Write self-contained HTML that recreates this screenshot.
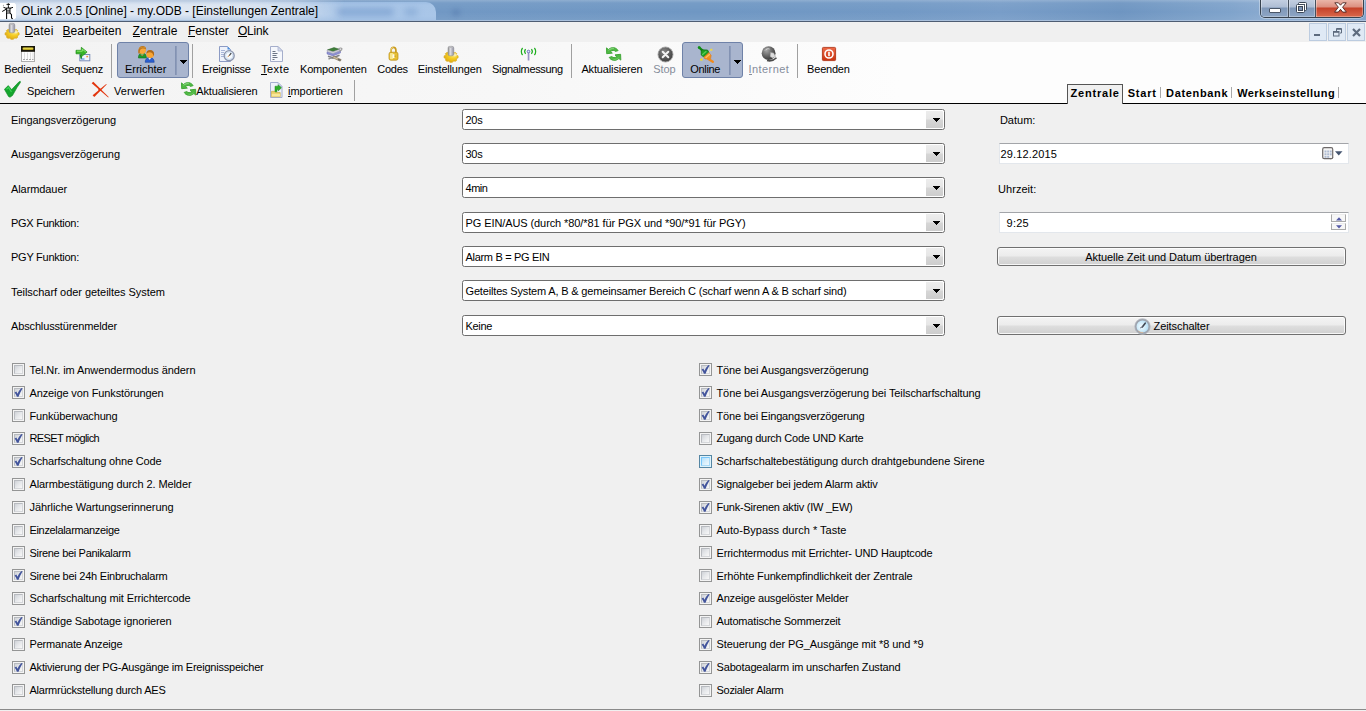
<!DOCTYPE html>
<html lang="de"><head><meta charset="utf-8"><title>OLink 2.0.5 [Online] - my.ODB - [Einstellungen Zentrale]</title>
<style>
html,body{margin:0;padding:0}
body{width:1366px;height:711px;overflow:hidden;position:relative;background:#f0f0f0;font:11px/13px "Liberation Sans",sans-serif;color:#000}
body>*{position:absolute}
.t{white-space:nowrap;font-family:"Liberation Sans",sans-serif}
.ul{position:absolute;left:0;height:1px}
.ic{overflow:visible}
#title{left:0;top:0;width:1366px;height:21px;background:linear-gradient(to bottom,rgba(255,255,255,.22) 0,rgba(255,255,255,.05) 3px,rgba(255,255,255,0) 12px,rgba(255,255,255,.06) 20px),linear-gradient(to right,#7399c5 0,#7198c4 430px,#6f97c3 700px,#7299c5 900px,#789dc8 1000px,#6e95c1 1120px,#7fa3cb 1230px,#88a9cf 1262px,#7ca0c9 1366px)}
#ttab{left:0;top:2px;width:436px;height:19px;border-radius:0 10px 0 0;background:linear-gradient(to bottom,#9dbde3 0,#a8c5e7 3px,#a9c6e8 14px,#a3c1e5 19px)}
#tblob1{left:336px;top:8px;width:58px;height:8px;background:rgba(105,145,198,.55);filter:blur(3px);border-radius:4px}
#tblob2{left:404px;top:8px;width:14px;height:8px;background:rgba(105,145,198,.4);filter:blur(3px);border-radius:4px}
#tblob3{left:452px;top:9px;width:8px;height:7px;background:rgba(70,105,160,.35);filter:blur(2.500px);border-radius:4px}
#tglow{left:0;top:0;width:345px;height:21px;background:linear-gradient(to bottom,rgba(200,212,230,.75) 0,rgba(222,230,241,.97) 5px,rgba(225,232,242,.98) 14px,rgba(196,213,234,.9) 20px);-webkit-mask-image:linear-gradient(to right,#000 0,#000 235px,rgba(0,0,0,.75) 290px,rgba(0,0,0,0) 345px);mask-image:linear-gradient(to right,#000 0,#000 235px,rgba(0,0,0,.75) 290px,rgba(0,0,0,0) 345px)}
#tline1{left:0;top:20px;width:1366px;height:1px;background:#a9c0dc}
#tline2{left:0;top:21px;width:1366px;height:1px;background:#4e5d73}
#capbtns{left:1260px;top:0;width:104px;height:18px;border:1px solid #37424f;border-top:0;border-radius:0 0 5px 5px;box-sizing:border-box;overflow:hidden;box-shadow:0 0 0 1px rgba(255,255,255,.35)}
.cb{position:absolute;top:0;height:17px;box-sizing:border-box;border-right:1px solid #46505e;background:linear-gradient(to bottom,#c3cfe1 0,#aebdd4 7px,#7f97b8 8px,#8ea6c5 17px);box-shadow:inset 1px 0 0 rgba(255,255,255,.35),inset -1px -1px 0 rgba(255,255,255,.3)}
.cmin{left:0;width:28px}.cmin i{position:absolute;left:9px;top:9px;width:10px;height:3px;background:#fff;border:1px solid #4a5668;box-sizing:content-box;border-radius:1px;margin:-1px}
.cmax{left:28px;width:27px}
.cclose{left:55px;width:47px;border-right:0;background:linear-gradient(to bottom,#eab5a9 0,#dc8f80 7px,#c5412a 8px,#d9694c 17px)}
#menubar{left:0;top:22px;width:1366px;height:20px;background:#f0f0f0}
.mdi{top:23px;width:18px;height:18px;box-sizing:border-box;border:1px solid #bccce0;background:#dfe9f5}
#tb1{left:0;top:42px;width:1366px;height:37px;background:linear-gradient(to right,#f3f3f3 0,#f7f7f7 500px,#fdfdfd 900px,#fdfdfd 100%)}
#tb2{left:0;top:79px;width:1366px;height:24px;background:linear-gradient(to right,#f3f3f3 0,#f7f7f7 500px,#fdfdfd 900px,#fdfdfd 100%)}
#tabbg{left:0;top:0;width:0;height:0}
.sep{width:1px;background:#a0a0a0}
.pbtn{box-sizing:content-box;border:1px solid #6f82a8;border-radius:3px;background:#a9b5ce}
.pbtn i{position:absolute;top:3px;width:2px;height:29px;background:linear-gradient(to right,#7d8dae,#93a1bf)}
.pbtn b{position:absolute;top:17px}
#hline{left:0;top:103px;width:1366px;height:1px;background:#000}
#tabsel{left:1067px;top:84px;width:56px;height:20px;box-sizing:border-box;border:1px solid #555;border-bottom:0;background:#f0f0f0}
.tsep{top:87px;width:1px;height:11px;background:#a8a8a8}
#main{left:0;top:104px;width:1366px;height:605px;background:#f0f0f0}
#botline{left:0;top:709px;width:1366px;height:1px;background:#8a8a8a}
.combo{left:462px;width:483px;height:21px;box-sizing:border-box;border:1px solid #6e6e6e;border-radius:2.500px;background:#fff}
.combo i{position:absolute;right:1px;top:1px;width:17px;height:17px;background:linear-gradient(to bottom,#ededed 0,#e6e6e6 8px,#d6d6d6 9px,#cdcdcd 17px);border-radius:0 1px 1px 0}
.combo b{position:absolute;left:470px;top:8px}
.combo b,.pbtn b{width:7px;height:1px;background:#000}
.combo b::before,.pbtn b::before{content:'';position:absolute;left:1px;top:1px;width:5px;height:1px;background:#000}
.combo b::after,.pbtn b::after{content:'';position:absolute;left:3px;top:3px;width:1px;height:1px;background:#000;box-shadow:-1px -1px #000,0 -1px #000,1px -1px #000}
.edit{left:999px;width:350px;height:21px;box-sizing:border-box;background:#fff;border:1px solid #e3e7ec;border-top-color:#a3a5a9}
.spin{left:1331px;width:15px;height:8px;box-sizing:border-box;border:1px solid #a9a9a9;border-top-color:#ececec;background:#f7f7f7}
.spin svg{position:absolute;left:4px}
.btn{left:997px;width:349px;height:19px;box-sizing:border-box;border:1px solid #707070;border-radius:3px;background:linear-gradient(to bottom,#f4f4f4 0,#ececec 8px,#dedede 9px,#d0d0d0 17px);box-shadow:inset 0 0 0 1px rgba(255,255,255,.8)}
.cbx{width:13px;height:13px;box-sizing:border-box;border:1px solid #949595;background:#f4f4f4}
.cbx i{position:absolute;left:1px;top:1px;width:9px;height:9px;box-sizing:border-box;border:1px solid #b8bbc0;border-right-color:#d5d7da;border-bottom-color:#d5d7da;background:linear-gradient(135deg,#cfd2d7 0,#e4e6e9 45%,#f8f8f8 100%)}
.cbx i svg{position:absolute;left:-1px;top:-1px}
.cbx.hot{border-color:#5586a3;background:#dff3fb}
.cbx.hot i{border-color:#79c6f9;border-right-color:#a8daf8;border-bottom-color:#a8daf8;background:linear-gradient(135deg,#b1dffd 0,#d6eefb 50%,#f0f9fe 100%)}

</style></head>
<body>
<div id="title"></div>
<div id="ttab"></div><div id="tblob1"></div><div id="tblob2"></div><div id="tblob3"></div><div id="tglow"></div>
<div id="tline1"></div><div id="tline2"></div>
<svg id="appico" width="17" height="17" viewBox="0 0 17 17" style="left:0;top:3px">
<path d="M-1 0h15.500l1.500 1.500v13.300l-1.500 1.500H-1z" fill="#fff"/>
<rect x="6.600" y="5" width="3.400" height="3" fill="#cfcfcf"/>
<g stroke="#000" stroke-width=".9" fill="none">
<path d="M6.500 1.400h3.500M8.300 .2v2.400M8.400 2.600v2.400"/>
<rect x="6.600" y="5" width="3.400" height="5"/>
<path d="M6.600 8h3.400"/>
<path d="M6.600 5.600L3.400 4.200M6.200 6.200L2.200 8.500M10 5.400l3-1.100" stroke-width="1"/>
<path d="M6.600 10v5.900M10 10l1.500 1.700v3.300l1.200.7" stroke-width="1.050"/>
</g>
<circle cx="3.400" cy="2.300" r=".5" fill="#777"/>
</svg>
<div id="capbtns"><div class="cb cmin"><i></i></div><div class="cb cmax"><svg width="13" height="13" viewBox="0 0 13 13" style="position:absolute;left:6px;top:1px"><g fill="none" stroke="#3b4656" stroke-width="1"><rect x="3.5" y="1.5" width="8" height="8" rx="1" fill="#fff" stroke="#3b4656"/><rect x="5.5" y="3.5" width="4" height="4" fill="#7d93b4"/><rect x="1.5" y="3.5" width="8" height="8" rx="1" fill="#fff"/><rect x="3.5" y="5.5" width="4" height="4" fill="#7d93b4"/></g></svg></div><div class="cb cclose"><svg width="13" height="11" viewBox="0 0 13 11" style="position:absolute;left:18px;top:2px"><path d="M.8.800h3.600l2.100 2.400L8.600.8h3.600L8.600 5.200l3.800 4.900H8.700L6.500 7.300 4.300 10.100H.6l3.800-4.900z" fill="#fff" stroke="#4a2420" stroke-width=".9" stroke-linejoin="round"/></svg></div></div>
<div id="menubar"></div>
<svg class="ic" width="17" height="18" viewBox="0 0 17 18" style="left:4px;top:23px">
<defs><linearGradient id="gcym" x1="0" x2="1" y1="0" y2="0"><stop offset="0" stop-color="#8d8d8d"/><stop offset=".4" stop-color="#dedee2"/><stop offset="1" stop-color="#8e8ea0"/></linearGradient>
<radialGradient id="ggdm" cx=".65" cy=".3" r=".8"><stop offset="0" stop-color="#fbe98a"/><stop offset=".45" stop-color="#f5cd22"/><stop offset="1" stop-color="#dba414"/></radialGradient></defs>
<path d="M9.43 16.30L6.77 16.30L6.58 15.48L4.99 14.97L4.11 15.45L2.23 13.99L2.84 13.31L2.19 12.08L1.13 11.93L1.13 9.87L2.19 9.72L2.84 8.49L2.23 7.81L4.11 6.35L4.99 6.83L6.58 6.32L6.77 5.50L9.43 5.50L9.62 6.32L11.21 6.83L12.09 6.35L13.97 7.81L13.36 8.49L14.01 9.72L15.07 9.87L15.07 11.93L14.01 12.08L13.36 13.31L13.97 13.99L12.09 15.45L11.21 14.97L9.62 15.48z" fill="url(#ggdm)" stroke="#d9a81c" stroke-width=".7" stroke-linejoin="round"/>
<ellipse cx="11.800" cy="9" rx="2" ry="1.400" fill="#f9efb8" opacity=".85"/>
<rect x="5" y=".3" width="5.800" height="9.500" rx="1.800" fill="url(#gcym)" stroke="#8a8a8e" stroke-width=".5"/>
<ellipse cx="7.900" cy="1.300" rx="2.300" ry=".8" fill="#b9b9bd"/>
</svg>
<div class="mdi" style="left:1309px"><i style="position:absolute;left:4px;top:10px;width:6px;height:2px;background:#5d6b7e"></i></div>
<div class="mdi" style="left:1328px"><svg width="10" height="9" viewBox="0 0 10 9" style="position:absolute;left:4px;top:4px"><g fill="none" stroke="#5d6b7e"><path d="M3.500 3V.5h5v4.500H7" /><path d="M3.500 1.300h5" /><rect x=".5" y="3.500" width="5.500" height="4.500"/><path d="M.5 4.300h5.500"/></g></svg></div>
<div class="mdi" style="left:1347px"><svg width="9" height="9" viewBox="0 0 9 9" style="position:absolute;left:4px;top:4px"><path d="M1 1l7 7M8 1L1 8" stroke="#5d6b7e" stroke-width="2.200"/></svg></div>
<div id="tb1"></div><div id="tb2"></div><div id="tabbg"></div>
<i class="sep" style="left:111px;top:44px;height:34px"></i>
<i class="sep" style="left:192px;top:44px;height:34px"></i>
<i class="sep" style="left:571px;top:44px;height:34px"></i>
<i class="sep" style="left:797px;top:44px;height:34px"></i>
<div class="pbtn" style="left:117px;top:42px;width:70px;height:34px"><i style="left:57px"></i><b style="left:62px"></b></div>
<div class="pbtn" style="left:682px;top:42px;width:59px;height:34px"><i style="left:46px"></i><b style="left:51px"></b></div>
<svg class="ic" width="14" height="16" viewBox="0 0 14 16" style="left:21px;top:46px">
<rect x=".5" y=".5" width="13" height="15" fill="#fdfdfd" stroke="#adadad"/>
<rect x="0" y="0" width="14" height="5.800" fill="#17150a"/>
<rect x="1.500" y="1.500" width="11" height="2.400" rx=".8" fill="#b9a51e"/>
<rect x="2" y="1.700" width="10" height="1.100" rx=".5" fill="#ecdf55"/>
<g stroke="#dedede" stroke-width="1"><path d="M3.500 6.500v7M6.500 6.500v7M9.500 6.500v7M12 6.500v7"/></g>
<g fill="#a8a8a8"><rect x="2" y="13" width="2" height="1"/><rect x="5" y="13" width="2" height="1"/><rect x="8" y="13" width="2" height="1"/><rect x="11" y="13" width="1.500" height="1"/></g>
</svg>
<svg class="ic" width="16" height="16" viewBox="0 0 16 16" style="left:75px;top:46px">
<rect x="4.800" y="8.500" width="10" height="6.300" fill="#f1f5fc" stroke="#7a8db8"/>
<path d="M6.500 10v3h3" fill="none" stroke="#3a8ad8" stroke-width="1.100"/><rect x="11.300" y="9.800" width="1.800" height="1.500" fill="#f3983e"/>
<path d="M5.500 8.500l.8 4" stroke="#1f8f1a" stroke-width="1.600" fill="none"/>
<path d="M1 4.300h5.300V1.300l5.800 4.800-5.800 4.700V7.800H1z" fill="#35b526" stroke="#1f8c17" stroke-width=".7" stroke-linejoin="round"/>
<path d="M1.800 5.200h5.500V3.200l3.600 2.800" fill="none" stroke="#93ea78" stroke-width=".9"/>
</svg>
<svg class="ic" width="17" height="17" viewBox="0 0 17 17" style="left:138px;top:46px">
<path d="M.4 12c0-3.500 1.500-5 4-5s4 1.500 4 5z" fill="#1d9a2a" stroke="#13701c" stroke-width=".6"/>
<path d="M2.500 8.300l1.700 1.700 1.700-1.700" fill="#7fd68a" stroke="#d94a2a" stroke-width=".6"/>
<ellipse cx="4.300" cy="4.200" rx="3.700" ry="3.800" fill="#f8a83a"/>
<path d="M.4 7.500C-.2 3 1.500.1 4.500 0 7 0 8.300 1.500 8.200 3.600 6.500 2 3.500 2 2.300 3.800c-.5 1-.6 2.500-.5 3.700z" fill="#b87320"/>
<path d="M1.500 2.500C3 1 5.500.8 7.500 2" fill="none" stroke="#d9952c" stroke-width=".8"/>
<path d="M7.200 16.300c0-3.300 1.800-4.800 4.500-4.800s4.500 1.500 4.500 4.800z" fill="#2a5fd0" stroke="#1a3f9a" stroke-width=".6"/>
<path d="M10 12l1.700 2.300 1.700-2.300" fill="#dfe9fb" stroke="#1a3f9a" stroke-width=".4"/>
<ellipse cx="12.200" cy="8.200" rx="3.800" ry="3.800" fill="#f9a533"/>
<path d="M8.500 8c-.3-2.600 1.200-4 3.500-4 2.700 0 4.300 1.700 4.100 4.500-.3 1-.5 1.300-.8 1.600C15.300 7.500 14 6.200 11.500 6.200 10 6.200 9 7 8.500 8z" fill="#b06a1a"/>
</svg>
<svg class="ic" width="16" height="16" viewBox="0 0 16 16" style="left:219px;top:46px">
<path d="M.5.500h8l3 3v12H.5z" fill="#eef2fb" stroke="#8c9bc4"/>
<path d="M8.500.5l3 3h-3z" fill="#4a90e0"/>
<path d="M2 4.500h4M2 6.500h3M2 8.500h3M2 10.500h3" stroke="#a9b6d8" stroke-width="1"/>
<circle cx="10.200" cy="9.700" r="5" fill="#dfeaf6" stroke="#8c95ad" stroke-width="1.300"/>
<circle cx="10.200" cy="9.700" r="3.600" fill="#f7fbff" stroke="#bcd0e8" stroke-width=".6"/>
<path d="M10.200 9.700l2-2.500" stroke="#444" stroke-width="1.200"/><path d="M10.200 9.700l-1.500 1" stroke="#d9863a" stroke-width="1"/>
</svg>
<svg class="ic" width="13" height="16" viewBox="0 0 13 16" style="left:270px;top:46px">
<path d="M.5.500h7.500l4.500 4.500v10.500H.5z" fill="#f5f7fc" stroke="#a5aecb"/>
<path d="M8 .5l4.500 4.500H8z" fill="#d5dbec" stroke="#a5aecb" stroke-width=".7"/>
<path d="M2.500 5.500h3M2.500 7.500h5M2.500 9.500h4M2.500 11.500h5M2.500 13.500h2" stroke="#6a7385" stroke-width="1"/>
</svg>
<svg class="ic" width="17" height="15" viewBox="0 0 17 15" style="left:326px;top:47px">
<path d="M1.500 2.800L8 .6l5.500 1.600-6.500 2.400z" fill="#3f7f3a" stroke="#2d5f2a" stroke-width=".5"/>
<path d="M1.200 3l5.800 1.800 7-2.600v1.500l-7 2.700-5.800-1.800z" fill="#dcdce4" stroke="#8a8a9a" stroke-width=".5"/>
<path d="M1 5l6 2 7.500-3v1.900l-7.500 3-6-2z" fill="#8f92d4" stroke="#6c6fb4" stroke-width=".5"/>
<path d="M12.500 1.500c2-.8 3.300-.6 3.500.3.200 1-1 1.600-2.500 2.400" fill="none" stroke="#9a9a9a" stroke-width="1.200"/>
<path d="M2 9.200l5 1.600 6.500-2.600" fill="none" stroke="#7e7e86" stroke-width="1.500"/>
<path d="M7.500 9l7.700 3.600-1 1.600-7.500-3.400z" fill="#cdbd9c" stroke="#7a6e58" stroke-width=".6"/>
<path d="M12.300 11.500l2.700 1.300-.8 1.300-2.600-1.200z" fill="#6f6a62"/>
<path d="M2.500 12.300c1.200-1.300 3.200-1.500 5-.8" fill="none" stroke="#8e8e8e" stroke-width="1.300"/>
</svg>
<svg class="ic" width="11" height="15" viewBox="0 0 11 15" style="left:387.700px;top:46px">
<path d="M3.100 7V4.300C3.100 2.400 4.100 1.300 5.500 1.300s2.400 1.100 2.400 3V7" fill="none" stroke="#c99a1c" stroke-width="1.700"/>
<path d="M3 6.500V4.300C3 2.600 4 1.400 5.300 1.300" fill="none" stroke="#f6e28a" stroke-width=".8"/>
<rect x="1" y="6.200" width="9" height="8" rx="1.800" fill="#e6bf35" stroke="#b98c12" stroke-width=".7"/>
<rect x="1.900" y="7.100" width="3.400" height="6.200" rx="1" fill="#f8e68a"/>
<rect x="4.600" y="8.300" width="1.900" height="3.600" rx=".5" fill="#fffbe6"/>
<rect x="6.500" y="9.500" width="1.200" height="1.500" fill="#b98c12" opacity=".55"/>
</svg>
<svg class="ic" width="17" height="18" viewBox="0 0 17 18" style="left:443px;top:46px">
<defs><linearGradient id="gcyt" x1="0" x2="1" y1="0" y2="0"><stop offset="0" stop-color="#8d8d8d"/><stop offset=".4" stop-color="#dedee2"/><stop offset="1" stop-color="#8e8ea0"/></linearGradient>
<radialGradient id="ggdt" cx=".65" cy=".3" r=".8"><stop offset="0" stop-color="#fbe98a"/><stop offset=".45" stop-color="#f5cd22"/><stop offset="1" stop-color="#dba414"/></radialGradient></defs>
<path d="M9.43 16.30L6.77 16.30L6.58 15.48L4.99 14.97L4.11 15.45L2.23 13.99L2.84 13.31L2.19 12.08L1.13 11.93L1.13 9.87L2.19 9.72L2.84 8.49L2.23 7.81L4.11 6.35L4.99 6.83L6.58 6.32L6.77 5.50L9.43 5.50L9.62 6.32L11.21 6.83L12.09 6.35L13.97 7.81L13.36 8.49L14.01 9.72L15.07 9.87L15.07 11.93L14.01 12.08L13.36 13.31L13.97 13.99L12.09 15.45L11.21 14.97L9.62 15.48z" fill="url(#ggdt)" stroke="#d9a81c" stroke-width=".7" stroke-linejoin="round"/>
<ellipse cx="11.800" cy="9" rx="2" ry="1.400" fill="#f9efb8" opacity=".85"/>
<rect x="5" y=".3" width="5.800" height="9.500" rx="1.800" fill="url(#gcyt)" stroke="#8a8a8e" stroke-width=".5"/>
<ellipse cx="7.900" cy="1.300" rx="2.300" ry=".8" fill="#b9b9bd"/>
</svg>
<svg class="ic" width="17" height="14" viewBox="0 0 17 14" style="left:519.500px;top:46.500px">
<g fill="none" stroke="#1fae1f" stroke-width="1.200"><path d="M2.600 1C.9 2.900.9 6.100 2.600 8"/><path d="M5.600 2.200C4.500 3.500 4.500 5.500 5.600 6.800"/><path d="M14.400 1c1.700 1.900 1.700 5.100 0 7"/><path d="M11.400 2.200c1.100 1.300 1.100 3.300 0 4.600"/></g>
<rect x="7.700" y="5.500" width="1.700" height="8" fill="#9993c6"/>
<circle cx="8.500" cy="4.500" r="1.300" fill="#e4e9ff" stroke="#5d62b0" stroke-width=".9"/>
</svg>
<svg class="ic" width="16" height="14" viewBox="0 0 16 14" style="left:605.5px;top:46.5px">
<g fill="#4fb944" stroke="#43a83a" stroke-width="1" stroke-linejoin="round">
<path d="M.5.900l1.900 1.600C3.900 1.100 5.800.5 7.800.7c1.900.3 3.400 1.300 4.300 2.900l-2.700.8C8.900 3.700 8.100 3.400 7.200 3.400 6.200 3.400 5.300 3.800 4.600 4.500L6.300 6.100.7 6.700z"/>
<path d="M14.800 13.100l-1.900-1.600c-1.500 1.400-3.400 2-5.400 1.800-1.900-.3-3.400-1.300-4.300-2.900l2.700-.8c.5.700 1.300 1 2.200 1 1 0 1.900-.4 2.600-1.100L9 7.900l5.600-.6z"/>
</g>
<path d="M2.600 3.300C4 2 5.900 1.400 7.800 1.600" fill="none" stroke="#9fe394" stroke-width=".8"/>
<path d="M12.700 10.700c-1.400 1.300-3.300 1.900-5.200 1.700" fill="none" stroke="#7fd673" stroke-width=".6"/>
</svg>
<svg class="ic" width="17" height="17" viewBox="0 0 17 17" style="left:656.500px;top:45.500px">
<defs><radialGradient id="gst" cx=".4" cy=".3" r=".8"><stop offset="0" stop-color="#858585"/><stop offset=".6" stop-color="#545454"/><stop offset="1" stop-color="#3c3c3c"/></radialGradient></defs>
<circle cx="8.500" cy="8.500" r="7.500" fill="url(#gst)" stroke="#a2a2a2" stroke-width=".9"/>
<path d="M5.700 5.700l5.600 5.600M11.300 5.700l-5.600 5.600" stroke="#f4f4f4" stroke-width="2" stroke-linecap="round"/>
</svg>
<svg class="ic" width="17" height="17" viewBox="0 0 17 17" style="left:697px;top:45.500px">
<path d="M2.200 1.600l3.500 3" stroke="#128a12" stroke-width="2.300" stroke-linecap="round"/>
<circle cx="2.200" cy="1.600" r="1.400" fill="#0f8f14"/>
<path d="M4.200 3.800l6.300.2 1.500 2.500-5.200 4.600-2.600-2.100z" fill="#1f9e22" stroke="#0f6e12" stroke-width=".7" stroke-linejoin="round"/>
<path d="M5.500 8.500l3.500-3" stroke="#55d055" stroke-width="1.200" stroke-linecap="round"/>
<path d="M12 6.500l2.100 3-.5 3.100-5.600.4-1.200-1.900z" fill="#f59322" stroke="#d9761a" stroke-width=".6" stroke-linejoin="round"/>
<path d="M9 11.500l3.500-3" stroke="#fbc15a" stroke-width="1.300" stroke-linecap="round"/>
<path d="M11 12.800l4.800 3" stroke="#f08a1c" stroke-width="2.300" stroke-linecap="round"/>
<rect x="13.300" y="2.800" width="2" height="2" fill="#f3d93a"/><rect x="3.300" y="12.600" width="2.200" height="2" fill="#f5e21a"/>
<path d="M12.300 5.800l1.200-1.200M5.300 12.500l1.200-1" stroke="#e8d98a" stroke-width=".8"/>
</svg>
<svg class="ic" width="17" height="17" viewBox="0 0 17 17" style="left:760.500px;top:45.500px">
<defs><radialGradient id="ggl" cx=".35" cy=".3" r=".8"><stop offset="0" stop-color="#a5a5a5"/><stop offset=".6" stop-color="#5a5a5a"/><stop offset="1" stop-color="#303030"/></radialGradient></defs>
<circle cx="7.600" cy="7.200" r="6.900" fill="url(#ggl)"/>
<path d="M9.500 6.500l3.200.5 1.800 3.500-2.800 1.500-2.600-1.400z" fill="#dcdcdc" stroke="#9a9a9a" stroke-width=".5"/>
<path d="M6 14.500c3.500 1 7-.3 9.500-2.800" fill="none" stroke="#4b4b4b" stroke-width="1.600"/>
<path d="M4 4.500c1-1.500 3-2.200 4.500-1.500" fill="none" stroke="#d8d8d8" stroke-width="1"/>
</svg>
<svg class="ic" width="14" height="14" viewBox="0 0 14 14" style="left:822px;top:47px">
<defs><linearGradient id="gbe" x1="0" x2="0" y1="0" y2="1"><stop offset="0" stop-color="#ee6a48"/><stop offset="1" stop-color="#c9330f"/></linearGradient></defs>
<rect x=".4" y=".4" width="13.200" height="13.200" rx="1" fill="url(#gbe)" stroke="#a92b0c" stroke-width=".8"/>
<circle cx="7" cy="7" r="4" fill="none" stroke="#fff" stroke-width="1.600"/>
<rect x="6.200" y="4.800" width="1.600" height="4.400" fill="#fff"/>
</svg>
<i class="sep" style="left:354px;top:80px;height:21px"></i>
<svg class="ic" width="17" height="17" viewBox="0 0 17 17" style="left:3.500px;top:80.500px">
<path d="M.4 8.300L4.300 4.600 7.600 8.600 15 .8l1.400-.4v1.100L13 6.500 8.500 14.500 6 16.250l-1.500-.75z" fill="#15a52e" stroke="#0e8a24" stroke-width=".6" stroke-linejoin="round"/>
<path d="M2.500 8.200l2-1.800 3 4.500" fill="none" stroke="#3ad455" stroke-width="1.200"/>
</svg>
<svg class="ic" width="17" height="16" viewBox="0 0 17 16" style="left:91.500px;top:81.500px">
<path d="M-.3 1.300L1.300-.2 16.700 14.900l-.5.600z" fill="#e3350d"/>
<path d="M14.700 2.400l-.5-.5L.6 13.300l1.700 1.600z" fill="#e3350d"/>
<circle cx="7.600" cy="7.700" r="1.300" fill="#e3350d"/>
</svg>
<svg class="ic" width="16" height="14" viewBox="0 0 16 14" style="left:180.5px;top:81.8px">
<g fill="#4fb944" stroke="#43a83a" stroke-width="1" stroke-linejoin="round">
<path d="M.5.900l1.900 1.600C3.900 1.100 5.800.5 7.800.7c1.900.3 3.400 1.300 4.300 2.900l-2.700.8C8.900 3.700 8.100 3.400 7.200 3.400 6.200 3.400 5.300 3.800 4.600 4.500L6.300 6.100.7 6.700z"/>
<path d="M14.800 13.100l-1.900-1.600c-1.500 1.400-3.400 2-5.400 1.800-1.900-.3-3.400-1.300-4.300-2.900l2.700-.8c.5.700 1.300 1 2.200 1 1 0 1.900-.4 2.600-1.100L9 7.900l5.600-.6z"/>
</g>
<path d="M2.600 3.300C4 2 5.900 1.400 7.800 1.600" fill="none" stroke="#9fe394" stroke-width=".8"/>
<path d="M12.700 10.700c-1.400 1.300-3.300 1.900-5.200 1.700" fill="none" stroke="#7fd673" stroke-width=".6"/>
</svg>
<svg class="ic" width="13" height="16" viewBox="0 0 13 16" style="left:270px;top:82px">
<path d="M.5.500h7.500l4 4v11H.5z" fill="#eef1fa" stroke="#a4aed0"/>
<path d="M8 .5l4 4H8z" fill="#d5dbee" stroke="#a4aed0" stroke-width=".6"/>
<path d="M1.500 9.300h3.300l.8 1.200h4.600v4.200h-8.700z" fill="#ecd068" stroke="#c4a53a" stroke-width=".6"/>
<path d="M1.800 11.800h8.200v2.700H1.800z" fill="#f8e89a"/>
<path d="M5 4.200h3.200V2.800l3.300 3-3.300 3.100V7.400H7v2.300H5z" fill="#2fae2a" stroke="#1c861a" stroke-width=".5" stroke-linejoin="round"/>
</svg>
<div id="hline"></div>
<div id="tabsel"></div>
<i class="tsep" style="left:1160px"></i>
<i class="tsep" style="left:1231px"></i>
<i class="tsep" style="left:1338px"></i>
<div id="main"></div><div id="botline"></div>
<div class="combo" style="top:109px"><i></i><b></b></div>
<div class="combo" style="top:143px"><i></i><b></b></div>
<div class="combo" style="top:177px"><i></i><b></b></div>
<div class="combo" style="top:212px"><i></i><b></b></div>
<div class="combo" style="top:246px"><i></i><b></b></div>
<div class="combo" style="top:280px"><i></i><b></b></div>
<div class="combo" style="top:315px"><i></i><b></b></div>
<div class="edit" style="top:143px"></div><div class="edit" style="top:212px"></div>
<svg class="ic" width="12" height="13" viewBox="0 0 12 13" style="left:1321.500px;top:146.500px">
<rect x=".7" y=".7" width="10" height="11" rx="1.500" fill="#f4f4f4" stroke="#6e6a6a" stroke-width="1.200"/>
<path d="M9 12.300l2-2" stroke="#6e6a6a" stroke-width="1"/>
<g fill="#aebbd2"><rect x="2.500" y="3.500" width="2" height="2"/><rect x="5.200" y="3.500" width="2" height="2"/><rect x="7.900" y="3.500" width="1.800" height="2"/><rect x="2.500" y="6.300" width="2" height="2"/><rect x="5.200" y="6.300" width="2" height="2"/><rect x="7.900" y="6.300" width="1.800" height="2"/><rect x="2.500" y="9" width="2" height="1.800"/><rect x="5.200" y="9" width="2" height="1.800"/></g>
</svg>
<svg class="ic" width="8" height="5" viewBox="0 0 8 5" style="left:1334.500px;top:150.500px"><path d="M0 .3h7.500L3.750 4.500z" fill="#44546f"/></svg>
<div class="spin" style="top:214px"><svg width="6" height="4" viewBox="0 0 6 4" style="top:1.500px"><path d="M0 3.500h6L3 .2z" fill="#555aa6"/></svg></div>
<div class="spin" style="top:223px;height:7px"><svg width="6" height="4" viewBox="0 0 6 4" style="top:1px"><path d="M0 .3h6L3 3.600z" fill="#555aa6"/></svg></div>
<div class="btn" style="top:247px"></div><div class="btn" style="top:316px"></div>
<svg class="ic" width="17" height="17" viewBox="0 0 17 17" style="left:1133.500px;top:317.500px">
<defs><radialGradient id="gck" cx=".42" cy=".5" r=".6"><stop offset="0" stop-color="#f4fbff"/><stop offset=".6" stop-color="#c9e8f8"/><stop offset="1" stop-color="#a4d2ee"/></radialGradient></defs>
<circle cx="8.500" cy="8.500" r="7" fill="url(#gck)" stroke="#9ea3ad" stroke-width="2"/>
<circle cx="8.500" cy="8.500" r="7.900" fill="none" stroke="#c9ccd2" stroke-width=".5"/>
<path d="M8.300 8.900l2.900-3.700" stroke="#3f4550" stroke-width="1.600" stroke-linecap="round"/>
<path d="M8.300 8.900l-1.800.9" stroke="#6a7080" stroke-width="1" stroke-linecap="round"/>
<path d="M4.300 12.800c1.200 1.300 3 1.900 4.800 1.600" fill="none" stroke="#e0b48a" stroke-width=".8"/>
</svg>
<div class="cbx" style="left:12px;top:363px"><i></i></div>
<div class="cbx" style="left:12px;top:386px"><i><svg width="9" height="9" viewBox="0 0 9 9"><path d="M.6 4.400l1.700-1 1.300 2.400C4.500 3.600 5.900 1.600 7.500.1l1.100.4C7.200 2.700 5.600 5.700 4.600 8.800H2.900C2.400 7.200 1.600 5.700.6 4.400z" fill="#42549c"/></svg></i></div>
<div class="cbx" style="left:12px;top:409px"><i></i></div>
<div class="cbx" style="left:12px;top:432px"><i><svg width="9" height="9" viewBox="0 0 9 9"><path d="M.6 4.400l1.700-1 1.300 2.400C4.500 3.600 5.900 1.600 7.500.1l1.100.4C7.200 2.700 5.600 5.700 4.600 8.800H2.900C2.400 7.200 1.600 5.700.6 4.400z" fill="#42549c"/></svg></i></div>
<div class="cbx" style="left:12px;top:455px"><i><svg width="9" height="9" viewBox="0 0 9 9"><path d="M.6 4.400l1.700-1 1.300 2.400C4.500 3.600 5.900 1.600 7.500.1l1.100.4C7.200 2.700 5.600 5.700 4.600 8.800H2.900C2.400 7.200 1.600 5.700.6 4.400z" fill="#42549c"/></svg></i></div>
<div class="cbx" style="left:12px;top:478px"><i></i></div>
<div class="cbx" style="left:12px;top:501px"><i></i></div>
<div class="cbx" style="left:12px;top:524px"><i></i></div>
<div class="cbx" style="left:12px;top:546px"><i></i></div>
<div class="cbx" style="left:12px;top:569px"><i><svg width="9" height="9" viewBox="0 0 9 9"><path d="M.6 4.400l1.700-1 1.300 2.400C4.500 3.600 5.900 1.600 7.500.1l1.100.4C7.200 2.700 5.600 5.700 4.600 8.800H2.900C2.400 7.200 1.600 5.700.6 4.400z" fill="#42549c"/></svg></i></div>
<div class="cbx" style="left:12px;top:592px"><i></i></div>
<div class="cbx" style="left:12px;top:615px"><i><svg width="9" height="9" viewBox="0 0 9 9"><path d="M.6 4.400l1.700-1 1.300 2.400C4.500 3.600 5.900 1.600 7.500.1l1.100.4C7.200 2.700 5.600 5.700 4.600 8.800H2.900C2.400 7.200 1.600 5.700.6 4.400z" fill="#42549c"/></svg></i></div>
<div class="cbx" style="left:12px;top:638px"><i></i></div>
<div class="cbx" style="left:12px;top:661px"><i><svg width="9" height="9" viewBox="0 0 9 9"><path d="M.6 4.400l1.700-1 1.300 2.400C4.500 3.600 5.900 1.600 7.500.1l1.100.4C7.200 2.700 5.600 5.700 4.600 8.800H2.900C2.400 7.200 1.600 5.700.6 4.400z" fill="#42549c"/></svg></i></div>
<div class="cbx" style="left:12px;top:684px"><i></i></div>
<div class="cbx" style="left:699px;top:363px"><i><svg width="9" height="9" viewBox="0 0 9 9"><path d="M.6 4.400l1.700-1 1.300 2.400C4.500 3.600 5.900 1.600 7.500.1l1.100.4C7.200 2.700 5.600 5.700 4.600 8.800H2.900C2.400 7.200 1.600 5.700.6 4.400z" fill="#42549c"/></svg></i></div>
<div class="cbx" style="left:699px;top:386px"><i><svg width="9" height="9" viewBox="0 0 9 9"><path d="M.6 4.400l1.700-1 1.300 2.400C4.500 3.600 5.900 1.600 7.500.1l1.100.4C7.200 2.700 5.600 5.700 4.600 8.800H2.900C2.400 7.200 1.600 5.700.6 4.400z" fill="#42549c"/></svg></i></div>
<div class="cbx" style="left:699px;top:409px"><i><svg width="9" height="9" viewBox="0 0 9 9"><path d="M.6 4.400l1.700-1 1.300 2.400C4.500 3.600 5.900 1.600 7.500.1l1.100.4C7.200 2.700 5.600 5.700 4.600 8.800H2.900C2.400 7.200 1.600 5.700.6 4.400z" fill="#42549c"/></svg></i></div>
<div class="cbx" style="left:699px;top:432px"><i></i></div>
<div class="cbx hot" style="left:699px;top:455px"><i></i></div>
<div class="cbx" style="left:699px;top:478px"><i><svg width="9" height="9" viewBox="0 0 9 9"><path d="M.6 4.400l1.700-1 1.300 2.400C4.500 3.600 5.900 1.600 7.500.1l1.100.4C7.200 2.700 5.600 5.700 4.600 8.800H2.900C2.400 7.200 1.600 5.700.6 4.400z" fill="#42549c"/></svg></i></div>
<div class="cbx" style="left:699px;top:501px"><i><svg width="9" height="9" viewBox="0 0 9 9"><path d="M.6 4.400l1.700-1 1.300 2.400C4.500 3.600 5.900 1.600 7.500.1l1.100.4C7.200 2.700 5.600 5.700 4.600 8.800H2.900C2.400 7.200 1.600 5.700.6 4.400z" fill="#42549c"/></svg></i></div>
<div class="cbx" style="left:699px;top:524px"><i></i></div>
<div class="cbx" style="left:699px;top:546px"><i></i></div>
<div class="cbx" style="left:699px;top:569px"><i></i></div>
<div class="cbx" style="left:699px;top:592px"><i><svg width="9" height="9" viewBox="0 0 9 9"><path d="M.6 4.400l1.700-1 1.300 2.400C4.500 3.600 5.900 1.600 7.500.1l1.100.4C7.200 2.700 5.600 5.700 4.600 8.800H2.900C2.400 7.200 1.600 5.700.6 4.400z" fill="#42549c"/></svg></i></div>
<div class="cbx" style="left:699px;top:615px"><i></i></div>
<div class="cbx" style="left:699px;top:638px"><i><svg width="9" height="9" viewBox="0 0 9 9"><path d="M.6 4.400l1.700-1 1.300 2.400C4.500 3.600 5.900 1.600 7.500.1l1.100.4C7.200 2.700 5.600 5.700 4.600 8.800H2.900C2.400 7.200 1.600 5.700.6 4.400z" fill="#42549c"/></svg></i></div>
<div class="cbx" style="left:699px;top:661px"><i><svg width="9" height="9" viewBox="0 0 9 9"><path d="M.6 4.400l1.700-1 1.300 2.400C4.500 3.600 5.900 1.600 7.500.1l1.100.4C7.200 2.700 5.600 5.700 4.600 8.800H2.900C2.400 7.200 1.600 5.700.6 4.400z" fill="#42549c"/></svg></i></div>
<div class="cbx" style="left:699px;top:684px"><i></i></div>
<span class="t" style="left:21.0px;top:4px;font-size:12px;line-height:15px;color:#000;letter-spacing:-0.016px;">OLink 2.0.5 [Online] - my.ODB - [Einstellungen Zentrale]</span>
<span class="t" style="left:24.5px;top:24px;font-size:12px;line-height:15px;letter-spacing:0.197px;">Datei<i class="ul" style="top:12px;width:8.7px;background:#000"></i></span>
<span class="t" style="left:62.5px;top:24px;font-size:12px;line-height:15px;letter-spacing:0.095px;">Bearbeiten<i class="ul" style="top:12px;width:8.0px;background:#000"></i></span>
<span class="t" style="left:132.5px;top:24px;font-size:12px;line-height:15px;letter-spacing:0.121px;">Zentrale<i class="ul" style="top:12px;width:7.3px;background:#000"></i></span>
<span class="t" style="left:187.9px;top:24px;font-size:12px;line-height:15px;letter-spacing:0.045px;">Fenster<i class="ul" style="top:12px;width:7.3px;background:#000"></i></span>
<span class="t" style="left:237.9px;top:24px;font-size:12px;line-height:15px;letter-spacing:-0.172px;">OLink<i class="ul" style="top:12px;width:9.3px;background:#000"></i></span>
<span class="t" style="left:4.3px;top:63px;letter-spacing:-0.203px;">Bedienteil</span>
<span class="t" style="left:61.3px;top:63px;letter-spacing:-0.262px;">Sequenz</span>
<span class="t" style="left:125.0px;top:63px;letter-spacing:-0.029px;">Errichter</span>
<span class="t" style="left:202.0px;top:63px;letter-spacing:-0.266px;">Ereignisse</span>
<span class="t" style="left:261.2px;top:63px;letter-spacing:0.401px;">Texte<i class="ul" style="top:11px;width:5.5px;background:#000"></i></span>
<span class="t" style="left:300.0px;top:63px;letter-spacing:-0.173px;">Komponenten</span>
<span class="t" style="left:377.2px;top:63px;letter-spacing:-0.219px;">Codes</span>
<span class="t" style="left:417.8px;top:63px;letter-spacing:-0.174px;">Einstellungen</span>
<span class="t" style="left:492.1px;top:63px;letter-spacing:-0.348px;">Signalmessung</span>
<span class="t" style="left:581.4px;top:63px;letter-spacing:-0.145px;">Aktualisieren</span>
<span class="t" style="left:653.2px;top:63px;color:#868d9b;letter-spacing:-0.035px;">Stop</span>
<span class="t" style="left:690.2px;top:63px;letter-spacing:-0.299px;">Online</span>
<span class="t" style="left:748.5px;top:63px;color:#868d9b;letter-spacing:0.423px;">Internet<i class="ul" style="top:11px;width:3.1px;background:#868d9b"></i></span>
<span class="t" style="left:807.1px;top:63px;letter-spacing:-0.207px;">Beenden</span>
<span class="t" style="left:27.1px;top:85px;letter-spacing:-0.216px;">Speichern</span>
<span class="t" style="left:114.0px;top:85px;letter-spacing:0.130px;">Verwerfen</span>
<span class="t" style="left:196.3px;top:85px;letter-spacing:-0.130px;">Aktualisieren</span>
<span class="t" style="left:288.0px;top:85px;letter-spacing:-0.021px;">importieren<i class="ul" style="top:11px;width:2.5px;background:#000"></i></span>
<span class="t" style="left:1070.5px;top:87px;font-weight:bold;letter-spacing:0.800px;">Zentrale</span>
<span class="t" style="left:1127.7px;top:87px;font-weight:bold;letter-spacing:0.800px;">Start</span>
<span class="t" style="left:1166.1px;top:87px;font-weight:bold;letter-spacing:0.650px;">Datenbank</span>
<span class="t" style="left:1237.2px;top:87px;font-weight:bold;letter-spacing:0.438px;">Werkseinstellung</span>
<span class="t" style="left:11.0px;top:114px;letter-spacing:-0.107px;">Eingangsverzögerung</span>
<span class="t" style="left:465.5px;top:114px;letter-spacing:-0.250px;">20s</span>
<span class="t" style="left:11.0px;top:148px;letter-spacing:-0.057px;">Ausgangsverzögerung</span>
<span class="t" style="left:465.5px;top:148px;letter-spacing:-0.250px;">30s</span>
<span class="t" style="left:11.0px;top:183px;letter-spacing:-0.086px;">Alarmdauer</span>
<span class="t" style="left:465.5px;top:182px;letter-spacing:-0.461px;">4min</span>
<span class="t" style="left:11.0px;top:217px;letter-spacing:-0.273px;">PGX Funktion:</span>
<span class="t" style="left:465.5px;top:217px;letter-spacing:-0.091px;">PG EIN/AUS (durch *80/*81 für PGX und *90/*91 für PGY)</span>
<span class="t" style="left:11.0px;top:251px;letter-spacing:-0.257px;">PGY Funktion:</span>
<span class="t" style="left:465.5px;top:251px;letter-spacing:-0.310px;">Alarm B = PG EIN</span>
<span class="t" style="left:11.0px;top:286px;letter-spacing:-0.041px;">Teilscharf oder geteiltes System</span>
<span class="t" style="left:465.5px;top:285px;letter-spacing:-0.165px;">Geteiltes System A, B &amp; gemeinsamer Bereich C (scharf wenn A &amp; B scharf sind)</span>
<span class="t" style="left:11.0px;top:320px;letter-spacing:-0.142px;">Abschlusstürenmelder</span>
<span class="t" style="left:465.5px;top:320px;letter-spacing:-0.328px;">Keine</span>
<span class="t" style="left:999.9px;top:114px;letter-spacing:0.005px;">Datum:</span>
<span class="t" style="left:998.1px;top:183px;letter-spacing:0.037px;">Uhrzeit:</span>
<span class="t" style="left:1000.5px;top:148px;letter-spacing:0.144px;">29.12.2015</span>
<span class="t" style="left:1006.5px;top:217px;letter-spacing:0.270px;">9:25</span>
<span class="t" style="left:1085.2px;top:251px;letter-spacing:-0.060px;">Aktuelle Zeit und Datum übertragen</span>
<span class="t" style="left:1153.5px;top:320px;letter-spacing:-0.072px;">Zeitschalter</span>
<span class="t" style="left:29.5px;top:364px;letter-spacing:-0.070px;">Tel.Nr. im Anwendermodus ändern</span>
<span class="t" style="left:29.5px;top:387px;letter-spacing:-0.119px;">Anzeige von Funkstörungen</span>
<span class="t" style="left:29.5px;top:410px;letter-spacing:-0.168px;">Funküberwachung</span>
<span class="t" style="left:29.5px;top:432px;letter-spacing:-0.600px;">RESET möglich</span>
<span class="t" style="left:29.5px;top:455px;letter-spacing:-0.151px;">Scharfschaltung ohne Code</span>
<span class="t" style="left:29.5px;top:478px;letter-spacing:-0.097px;">Alarmbestätigung durch 2. Melder</span>
<span class="t" style="left:29.5px;top:501px;letter-spacing:-0.084px;">Jährliche Wartungserinnerung</span>
<span class="t" style="left:29.5px;top:524px;letter-spacing:-0.333px;">Einzelalarmanzeige</span>
<span class="t" style="left:29.5px;top:547px;letter-spacing:-0.315px;">Sirene bei Panikalarm</span>
<span class="t" style="left:29.5px;top:570px;letter-spacing:-0.247px;">Sirene bei 24h Einbruchalarm</span>
<span class="t" style="left:29.5px;top:592px;letter-spacing:-0.124px;">Scharfschaltung mit Errichtercode</span>
<span class="t" style="left:29.5px;top:615px;letter-spacing:-0.127px;">Ständige Sabotage ignorieren</span>
<span class="t" style="left:29.5px;top:638px;letter-spacing:-0.177px;">Permanate Anzeige</span>
<span class="t" style="left:29.5px;top:661px;letter-spacing:-0.225px;">Aktivierung der PG-Ausgänge im Ereignisspeicher</span>
<span class="t" style="left:29.5px;top:684px;letter-spacing:-0.239px;">Alarmrückstellung durch AES</span>
<span class="t" style="left:716.5px;top:364px;letter-spacing:-0.119px;">Töne bei Ausgangsverzögerung</span>
<span class="t" style="left:716.5px;top:387px;letter-spacing:-0.105px;">Töne bei Ausgangsverzögerung bei Teilscharfschaltung</span>
<span class="t" style="left:716.5px;top:410px;letter-spacing:-0.175px;">Töne bei Eingangsverzögerung</span>
<span class="t" style="left:716.5px;top:432px;letter-spacing:-0.240px;">Zugang durch Code UND Karte</span>
<span class="t" style="left:716.5px;top:455px;letter-spacing:-0.080px;">Scharfschaltebestätigung durch drahtgebundene Sirene</span>
<span class="t" style="left:716.5px;top:478px;letter-spacing:-0.161px;">Signalgeber bei jedem Alarm aktiv</span>
<span class="t" style="left:716.5px;top:501px;letter-spacing:-0.238px;">Funk-Sirenen aktiv (IW _EW)</span>
<span class="t" style="left:716.5px;top:524px;letter-spacing:0.023px;">Auto-Bypass durch * Taste</span>
<span class="t" style="left:716.5px;top:547px;letter-spacing:-0.180px;">Errichtermodus mit Errichter- UND Hauptcode</span>
<span class="t" style="left:716.5px;top:570px;letter-spacing:-0.129px;">Erhöhte Funkempfindlichkeit der Zentrale</span>
<span class="t" style="left:716.5px;top:592px;letter-spacing:-0.168px;">Anzeige ausgelöster Melder</span>
<span class="t" style="left:716.5px;top:615px;letter-spacing:-0.191px;">Automatische Sommerzeit</span>
<span class="t" style="left:716.5px;top:638px;letter-spacing:-0.087px;">Steuerung der PG_Ausgänge mit *8 und *9</span>
<span class="t" style="left:716.5px;top:661px;letter-spacing:-0.159px;">Sabotagealarm im unscharfen Zustand</span>
<span class="t" style="left:716.5px;top:684px;letter-spacing:-0.280px;">Sozialer Alarm</span>
</body></html>
